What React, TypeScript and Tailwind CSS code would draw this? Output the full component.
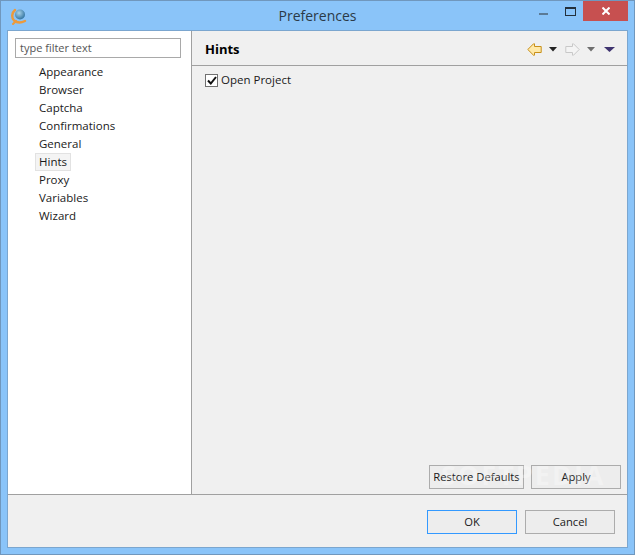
import React from "react";

const pages = ["Appearance", "Browser", "Captcha", "Confirmations", "General", "Hints", "Proxy", "Variables", "Wizard"];

function Logo() {
    return (
        <svg width="16" height="17" viewBox="0 0 16 17">
            <defs>
                <radialGradient id="ball" cx="0.4" cy="0.35" r="0.7">
                    <stop offset="0" stopColor="#a9d3e8" />
                    <stop offset="1" stopColor="#2c6f9e" />
                </radialGradient>
            </defs>
            <path d="M4 2 C0.5 5 0.5 10 3 12.5 C6 15 10 15 14 13" fill="none" stroke="#ec9a3c" strokeWidth="2.4" strokeLinecap="round" />
            <path d="M2 16 L5 13" stroke="#ec9a3c" strokeWidth="2" strokeLinecap="round" />
            <circle cx="9" cy="6.5" r="5" fill="url(#ball)" />
        </svg>
    );
}

function Arrow({ flip, fill, stroke }: { flip?: boolean; fill: string; stroke: string }) {
    return (
        <svg width="15" height="13" viewBox="0 0 15 13" className={flip ? "-scale-x-100" : ""}>
            <path d="M0.8 6.5 L6.5 0.8 L7.5 0.8 L7.5 3.5 L14.2 3.5 L14.2 9.5 L7.5 9.5 L7.5 12.2 L6.5 12.2 Z" fill={fill} stroke={stroke} strokeWidth="1" />
        </svg>
    );
}

function Caret({ color, wide }: { color: string; wide?: boolean }) {
    return (
        <svg width={wide ? 11 : 8} height="5" viewBox={wide ? "0 0 11 5" : "0 0 8 5"}>
            <path d={wide ? "M0 0 H11 L5.5 5 Z" : "M0 0 H8 L4 4.5 Z"} fill={color} />
        </svg>
    );
}

function Button({ label, className }: { label: string; className: string }) {
    return (
        <div className={`flex h-[24px] items-center justify-center border bg-[#ededed] text-[11.2px] text-[#1a1a1a] ${className}`}>
            {label}
        </div>
    );
}

export default function App() {
    return (
        <div className="flex h-[555px] w-[635px] flex-col overflow-hidden border border-[#7097bd] bg-[#8ac4f9] font-['Open_Sans','Liberation_Sans',sans-serif] text-[11.5px] text-[#1a1a1a]">
            <div className="relative flex h-[29px] shrink-0 items-start pl-[10px]">
                <div className="mt-[7px]">
                    <Logo />
                </div>
                <div className="absolute inset-x-0 top-[5px] text-center text-[14px] leading-[20px] text-[#2b3a47]">Preferences</div>
                <div className="ml-auto mr-[6px] flex items-start">
                    <div className="mr-[17px] mt-[12px] h-[2px] w-[9px] bg-[#5b7a96]" />
                    <div className="mr-[7px] mt-[6px] h-[9px] w-[11px] border border-t-2 border-[#23303c]" />
                    <div className="flex h-[20px] w-[45px] items-center justify-center bg-[#c75050] text-white">
                        <svg width="8" height="8" viewBox="0 0 8 8">
                            <path d="M0.5 0.5 L7.5 7.5 M7.5 0.5 L0.5 7.5" stroke="#fff" strokeWidth="2" />
                        </svg>
                    </div>
                </div>
            </div>

            <div className="mb-[6px] ml-[6px] mr-[6px] flex min-h-0 flex-1 flex-col border border-[#7ba6cf] bg-[#f0f0f0]">
                <div className="flex min-h-0 flex-1">
                    <div className="w-[184px] shrink-0 border-r border-[#a0a0a0] bg-white pl-[7px] pt-[7px]">
                        <div className="flex h-[20px] w-[166px] items-center border border-[#a9a9a9] px-[4px] text-[11px] text-[#555]">
                            type filter text
                        </div>
                        <div className="mt-[5px] flex flex-col items-start">
                            {pages.map((p) => (
                                <div
                                    key={p}
                                    className={
                                        p === "Hints"
                                            ? "ml-[20px] flex h-[18px] items-center border border-[#e2e2e2] bg-[#f4f4f4] px-[3px] leading-[16px]"
                                            : "ml-[24px] flex h-[18px] items-center leading-[16px]"
                                    }
                                >
                                    {p}
                                </div>
                            ))}
                        </div>
                    </div>

                    <div className="flex min-w-0 flex-1 flex-col">
                        <div className="flex h-[35px] shrink-0 items-center border-b border-[#a0a0a0] pl-[13px] pr-[12px] pt-[2px]">
                            <span className="mt-[2px] text-[13px] font-bold text-black">Hints</span>
                            <div className="ml-auto flex items-center">
                                <Arrow fill="#ffe9a8" stroke="#c8901a" />
                                <div className="ml-[7px]"><Caret color="#222" /></div>
                                <div className="ml-[8px]"><Arrow flip fill="#f4f4f4" stroke="#c8c8c8" /></div>
                                <div className="ml-[7px]"><Caret color="#6e6e6e" /></div>
                                <div className="ml-[9px]"><Caret color="#3f3470" wide /></div>
                            </div>
                        </div>
                        <div className="flex items-center pl-[13px] pt-[6px]">
                            <div className="flex h-[13px] w-[13px] items-center justify-center border border-[#707070] bg-white">
                                <svg width="10" height="9" viewBox="0 0 10 9">
                                    <path d="M1 4.5 L3.8 7.5 L9 1" fill="none" stroke="#111" strokeWidth="2" />
                                </svg>
                            </div>
                            <span className="ml-[3px] leading-[16px]">Open Project</span>
                        </div>
                        <div className="relative mb-[5px] ml-auto mr-[6px] mt-auto flex gap-[7px]">
                            <Button label="Restore Defaults" className="w-[95px] border-[#acacac]" />
                            <Button label="Apply" className="w-[90px] border-[#acacac]" />
                            <div className="pointer-events-none absolute left-[12px] top-[-5px] text-[27px] font-bold leading-[30px] tracking-[2px] text-white/30">
                                SOFTPEDIA
                            </div>
                        </div>
                    </div>
                </div>

                <div className="flex h-[53px] shrink-0 items-start justify-end gap-[8px] border-t border-[#a0a0a0] pr-[12px] pt-[15px]">
                    <Button label="OK" className="w-[90px] border-[#3399ff]" />
                    <Button label="Cancel" className="w-[90px] border-[#acacac]" />
                </div>
            </div>
        </div>
    );
}
